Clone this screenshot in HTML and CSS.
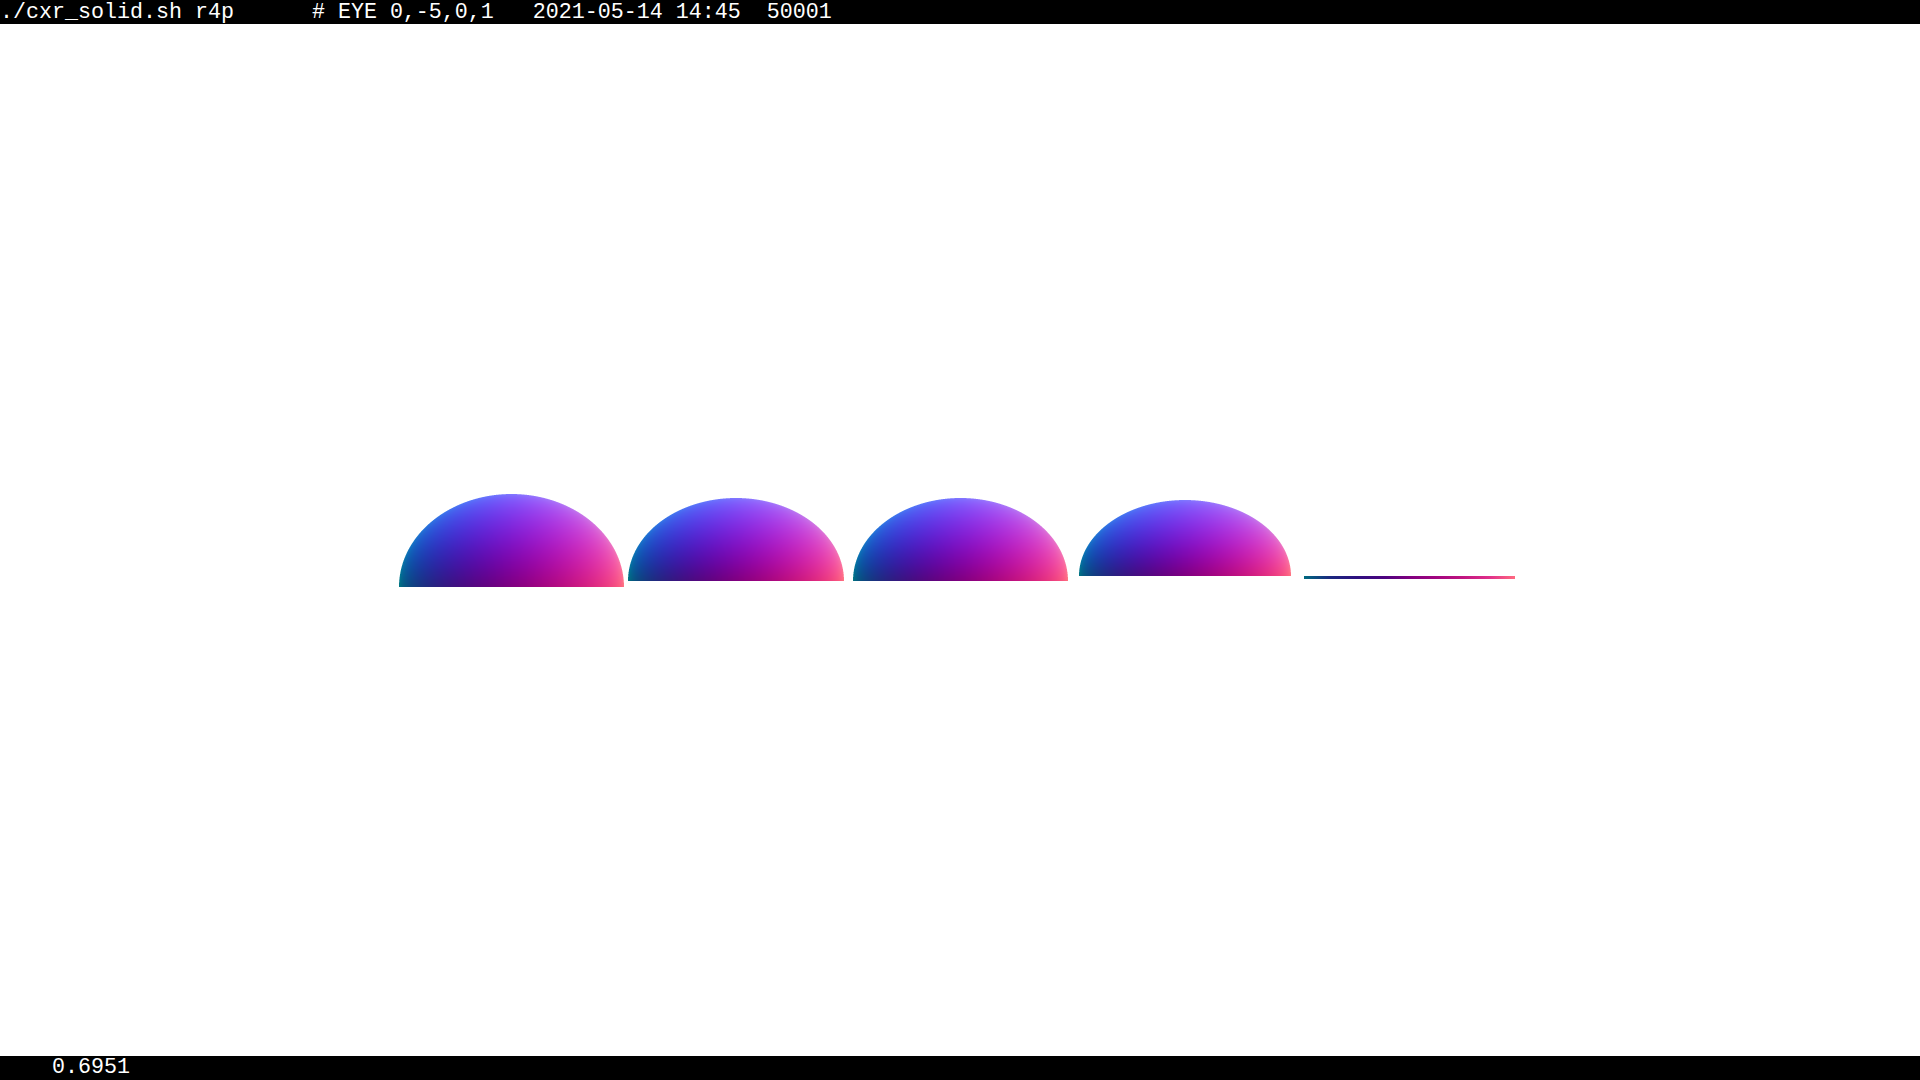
FILE: index.html
```html
<!DOCTYPE html>
<html lang="en">
<head>
<meta charset="utf-8">
<title>cxr_solid.sh r4p</title>
<link rel="stylesheet" href="styles.css">
</head>
<body>
<header class="bar bar-top"><pre class="bar-text">./cxr_solid.sh r4p      # EYE 0,-5,0,1   2021-05-14 14:45  50001</pre></header>
<main class="stage">
<canvas class="dome dome-1"></canvas>
<canvas class="dome dome-2"></canvas>
<canvas class="dome dome-3"></canvas>
<canvas class="dome dome-4"></canvas>
<div class="sliver"></div>
</main>
<footer class="bar bar-bottom"><pre class="bar-text">    0.6951</pre></footer>
<script src="script.js"></script>
</body>
</html>
```
FILE: styles.css
```css
* { box-sizing: border-box; }
html, body { margin: 0; height: 100%; background: #fff; overflow: hidden; }
body { display: flex; flex-direction: column; height: 1080px; }
.bar { flex: 0 0 24px; background: #000; color: #fff; overflow: hidden; }
.bar-text {
  margin: 0;
  font-family: "Liberation Mono", monospace;
  font-size: 21.667px;
  line-height: 24px;
  white-space: pre;
}
.bar-top .bar-text { padding-top: 1px; }
.stage { flex: 1 1 auto; position: relative; background: #fff; }
.dome { position: absolute; display: block; }
.dome-1 { left: 399px; top: 470px; width: 225px; height: 93px; }
.dome-2 { left: 628px; top: 474px; width: 216px; height: 83px; }
.dome-3 { left: 853px; top: 474px; width: 215px; height: 83px; }
.dome-4 { left: 1079px; top: 476px; width: 212px; height: 76px; }
.sliver {
  position: absolute;
  left: 1304px;
  top: 552px;
  width: 211px;
  height: 3px;
  background: linear-gradient(90deg, #006a80 0%, #1a2a80 12%, #2e1080 25%, #4c0480 38%, #800080 50%, #a00580 62%, #c01580 75%, #e0308a 88%, #ff6a80 100%);
}
```
FILE: script.js
```js
// Shade each dome by the surface normal of a spheroid: colour = 0.5 * (n + 1), viewed along +y.
document.querySelectorAll('canvas.dome').forEach(function (canvas) {
  var w = canvas.clientWidth, h = canvas.clientHeight;
  canvas.width = w;
  canvas.height = h;
  var ctx = canvas.getContext('2d');
  var img = ctx.createImageData(w, h);
  var a = w / 2, k = a / h, SS = 4;
  for (var py = 0; py < h; py++) {
    for (var px = 0; px < w; px++) {
      var cover = 0, r = 0, g = 0, b = 0;
      for (var sy = 0; sy < SS; sy++) {
        for (var sx = 0; sx < SS; sx++) {
          var x = (px + (sx + 0.5) / SS - a) / a;
          var z = (h - py - (sy + 0.5) / SS) / h;
          var d = x * x + z * z;
          if (d > 1) continue;
          var y = -Math.sqrt(1 - d);
          var zk = z * k;
          var len = Math.sqrt(x * x + y * y + zk * zk);
          cover++;
          r += 127.5 * (x / len + 1);
          g += 127.5 * (y / len + 1);
          b += 127.5 * (zk / len + 1);
        }
      }
      var i = (py * w + px) * 4;
      if (cover) {
        img.data[i] = r / cover;
        img.data[i + 1] = g / cover;
        img.data[i + 2] = b / cover;
        img.data[i + 3] = 255 * cover / (SS * SS);
      }
    }
  }
  ctx.putImageData(img, 0, 0);
});
```
